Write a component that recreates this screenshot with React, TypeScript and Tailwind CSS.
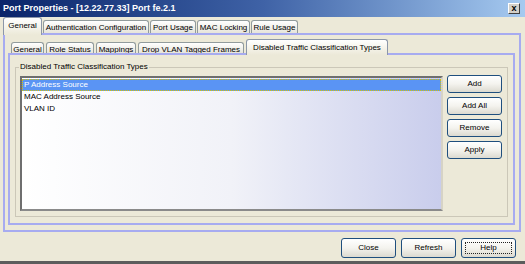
import React from "react";

type TabItem = { label: string; w: string; selected?: boolean };

// 상단 탭
const mainTabs: TabItem[] = [
  { label: "General", w: "w-[39px]", selected: true },
  { label: "Authentication Configuration", w: "w-[106px]" },
  { label: "Port Usage", w: "w-[46px]" },
  { label: "MAC Locking", w: "w-[53px]" },
  { label: "Rule Usage", w: "w-[47px]" },
];

// 하위 탭
const subTabs: TabItem[] = [
  { label: "General", w: "w-[33px]" },
  { label: "Role Status", w: "w-[48px]" },
  { label: "Mappings", w: "w-[40px]" },
  { label: "Drop VLAN Tagged Frames", w: "w-[106px]" },
  { label: "Disabled Traffic Classification Types", w: "w-[142px]", selected: true },
];

const listItems = ["P Address Source", "MAC Address Source", "VLAN ID"];

function Tab({ tab, tall }: { tab: TabItem; tall: boolean }) {
  if (tab.selected) {
    return (
      <div
        className={`relative z-10 -mb-[2px] flex items-start justify-center rounded-t-[3px] border border-b-0 border-[#8c97a8] bg-linear-to-b from-white to-[#ece9d8] pt-[3px] ${tab.w} ${
          tall ? "h-[18px]" : "h-[16px]"
        }`}
      >
        <span className="whitespace-nowrap leading-[9px]">{tab.label}</span>
      </div>
    );
  }
  return (
    <div
      className={`flex items-start justify-center rounded-t-[3px] border border-b-0 border-[#919b9c] bg-linear-to-b from-white to-[#e6e4da] pt-[2px] ${tab.w} ${
        tall ? "h-[13px]" : "h-[11px]"
      }`}
    >
      <span className="whitespace-nowrap leading-[9px]">{tab.label}</span>
    </div>
  );
}

function Btn({ label, focus, big }: { label: string; focus?: boolean; big?: boolean }) {
  return (
    <button
      className={`flex w-[55px] rounded-[3px] border border-[#1f4f7e] bg-linear-to-b from-white via-[#f4f3ee] to-[#dcdad0] p-[3px] text-[8px] text-black ${
        big ? "h-[20px]" : "h-[18px]"
      }`}
    >
      <span
        className={`flex flex-1 items-center justify-center leading-none ${
          focus ? "border border-dotted border-[#222]" : "border border-transparent"
        }`}
      >
        {label}
      </span>
    </button>
  );
}

export default function App() {
  return (
    <div className="flex h-[264px] w-[525px] flex-col overflow-hidden border-b-[3px] border-[#5c5c5c] bg-[#ece9d8] font-['Liberation_Sans',Arial,sans-serif] text-[8px] text-black">
      {/* 타이틀 바 */}
      <div className="flex h-[17px] items-center justify-between bg-linear-to-r from-[#0a246a] via-[#3f62a6] to-[#a6caf0] pl-[3px] pr-[5px]">
        <span className="text-[9px] font-bold leading-none text-white">
          Port Properties - [12.22.77.33] Port fe.2.1
        </span>
        <div className="flex h-[11px] w-[12px] items-center justify-center border border-t-white border-l-white border-r-[#404040] border-b-[#404040] bg-[#d4d0c8] text-[9px] font-bold leading-none text-black">
          x
        </div>
      </div>

      {/* 상단 탭 줄 */}
      <div className="flex h-[16px] items-end gap-[1px] pl-[3px]">
        {mainTabs.map((t) => (
          <Tab key={t.label} tab={t} tall />
        ))}
      </div>

      {/* 바깥 패널 */}
      <div className="ml-[3px] mr-[4px] flex h-[199px] flex-col border-2 border-[#a7abf0] px-[3px] pb-[5px] pt-[4px]">
        <div className="flex h-[14px] items-end gap-[2px] pl-[3px]">
          {subTabs.map((t) => (
            <Tab key={t.label} tab={t} tall={false} />
          ))}
        </div>

        {/* 안쪽 패널 */}
        <div className="mr-[1px] flex h-[172px] flex-col border-2 border-[#a7abf0] px-[5px] pb-[6px] pt-[7px]">
          <fieldset className="h-[155px] border border-[#cbc7b8] px-[4px] pb-[6px] pt-[4px]">
            <legend className="-ml-[1px] px-[1px] leading-[10px]">Disabled Traffic Classification Types</legend>
            <div className="flex h-[135px] gap-[4px] pr-[1px]">
              {/* 목록 */}
              <div className="flex flex-1 flex-col border-2 border-t-[#6f6f6f] border-l-[#6f6f6f] border-r-[#d6d3c6] border-b-[#8a8a8a] bg-linear-to-r from-white via-[#f1f2f8] to-[#c9cdec] pt-[1px]">
                {listItems.map((item, i) => (
                  <div
                    key={item}
                    className={`flex h-[12px] items-center pl-[1px] leading-none ${
                      i === 0
                        ? "border border-dotted border-[#d9c300] bg-[#5a94f4] text-white"
                        : "border border-transparent"
                    }`}
                  >
                    {item}
                  </div>
                ))}
              </div>
              {/* 버튼 */}
              <div className="-mt-[1px] flex flex-col gap-[4px]">
                <Btn label="Add" />
                <Btn label="Add All" />
                <Btn label="Remove" />
                <Btn label="Apply" />
              </div>
            </div>
          </fieldset>
        </div>
      </div>

      {/* 하단 버튼 */}
      <div className="flex flex-1 justify-end gap-[5px] pr-[9px] pt-[6px]">
        <Btn label="Close" big />
        <Btn label="Refresh" big />
        <Btn label="Help" focus big />
      </div>
    </div>
  );
}
